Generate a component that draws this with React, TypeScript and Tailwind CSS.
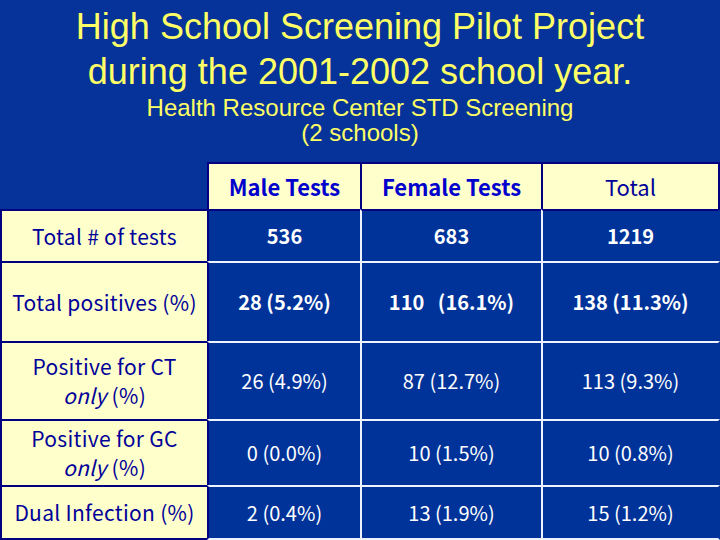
import React from 'react';

type Row = {
  label: React.ReactNode;
  values: string[];
  bold: boolean;
  h: string;
};

const rows: Row[] = [
  { label: 'Total # of tests', values: ['536', '683', '1219'], bold: true, h: 'h-[52px]' },
  { label: 'Total positives (%)', values: ['28 (5.2%)', '110   (16.1%)', '138 (11.3%)'], bold: true, h: 'h-[80px]' },
  {
    label: (
      <>
        Positive for CT
        <br />
        <span className="italic">only</span> (%)
      </>
    ),
    values: ['26 (4.9%)', '87 (12.7%)', '113 (9.3%)'],
    bold: false,
    h: 'h-[78px]',
  },
  {
    label: (
      <>
        Positive for GC
        <br />
        <span className="italic">only</span> (%)
      </>
    ),
    values: ['0 (0.0%)', '10 (1.5%)', '10 (0.8%)'],
    bold: false,
    h: 'h-[66px]',
  },
  { label: 'Dual Infection (%)', values: ['2 (0.4%)', '13 (1.9%)', '15 (1.2%)'], bold: false, h: 'h-[55px]' },
];

const tableFont = { fontFamily: '"Noto Sans CJK JP", "DejaVu Sans", sans-serif' };

export default function App() {
  return (
    <div className="w-[720px] h-[540px] bg-[#053399] overflow-hidden flex flex-col">
      <div className="text-center text-[#ffff66] pt-[4px]" style={{ fontFamily: '"Liberation Sans", Arial, sans-serif' }}>
        <h1 className="text-[36px] leading-[45px]">High School Screening Pilot Project</h1>
        <h1 className="text-[36px] leading-[45px]">during the 2001-2002 school year.</h1>
        <p className="text-[24px] leading-[25px] mt-[1px]">Health Resource Center STD Screening</p>
        <p className="text-[24px] leading-[25px]">(2 schools)</p>
      </div>

      <div className="mt-[17px] grid grid-cols-[207px_153px_181px_179px]" style={tableFont}>
        {/* header row */}
        <div className="h-[47px]" />
        <div className="h-[47px] bg-[#ffffcc] border-l-2 border-t-2 border-[#000080] flex items-center justify-center text-[22px] font-bold text-[#0000cc]">
          Male Tests
        </div>
        <div className="h-[47px] bg-[#ffffcc] border-l-2 border-t-2 border-[#000080] flex items-center justify-center text-[22px] font-bold text-[#0000cc]">
          Female Tests
        </div>
        <div className="h-[47px] bg-[#ffffcc] border-l-2 border-t-2 border-r-2 border-[#000080] flex items-center justify-center text-[22px] text-[#000099]">
          Total
        </div>

        {rows.map((row, i) => {
          const last = i === rows.length - 1;
          return (
            <React.Fragment key={i}>
              <div
                className={`${row.h} bg-[#ffffcc] border-l-2 border-t-2 border-[#000080] ${last ? 'border-b-2' : ''} flex items-center justify-center text-center text-[21px] leading-[29px] tracking-[0.3px] text-[#000099]`}
              >
                <div>{row.label}</div>
              </div>
              {row.values.map((v, j) => (
                <div
                  key={j}
                  className={`${row.h} bg-[#003399] border-t-2 border-l-2 ${i === 0 ? 'border-t-[#000080]' : 'border-t-[#eef2ff]'} ${j === 0 ? 'border-l-[#000080]' : 'border-l-[#eef2ff]'} ${j === 2 ? 'border-r-2 border-r-[#003399]' : ''} ${last ? 'border-b-2 border-b-[#eef2ff]' : ''} flex items-center justify-center text-[20px] text-white whitespace-pre ${row.bold ? 'font-bold' : ''}`}
                >
                  {v}
                </div>
              ))}
            </React.Fragment>
          );
        })}
      </div>
    </div>
  );
}
